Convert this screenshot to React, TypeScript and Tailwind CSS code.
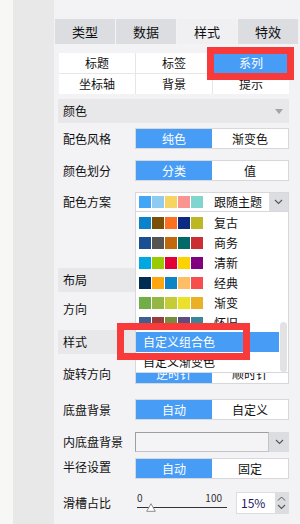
import React from 'react'

const BLUE = 'bg-[#479cf6]'

const TABS = ['类型', '数据', '样式', '特效']
const SUB_TABS = ['标题', '标签', '系列', '坐标轴', '背景', '提示']

const SCHEMES: { name: string; colors: string[] }[] = [
  { name: '复古', colors: ['#0b82cc', '#7a5008', '#fd7020', '#0d2b83', '#bcb723'] },
  { name: '商务', colors: ['#1b4f93', '#545454', '#c0680a', '#006a69', '#cb2f33'] },
  { name: '清新', colors: ['#00a8e1', '#99cc00', '#e30039', '#fcd300', '#800080'] },
  { name: '经典', colors: ['#002c53', '#ffa510', '#0c84c6', '#ffbd66', '#f74d4d'] },
  { name: '渐变', colors: ['#71ae46', '#96b744', '#c4cc38', '#ebe12a', '#eab026'] },
  { name: '怀旧', colors: ['#3c6090', '#973d3d', '#748d3f', '#614c82', '#38869a'] },
]

const THEME = ['#41a6f5', '#8fcbf0', '#f5d462', '#f99491', '#80d5cf']

const Chevron = () => (
  <svg width="9" height="6" viewBox="0 0 9 6">
    <polyline points="1,1 4.5,4.5 8,1" fill="none" stroke="#555" strokeWidth="1.1" />
  </svg>
)

const Swatches = ({ colors }: { colors: string[] }) => (
  <div className="flex w-[75px] shrink-0 gap-px">
    {colors.map((c) => (
      <span key={c} className="h-[12px] w-[12px]" style={{ backgroundColor: c }} />
    ))}
  </div>
)

const Header = ({ title, className = '' }: { title: string; className?: string }) => (
  <div className={`flex h-[24px] items-center justify-between bg-[#e8e8ea] pl-[5px] pr-[6px] ${className}`}>
    <span>{title}</span>
    <svg width="8" height="5" viewBox="0 0 8 5">
      <polygon points="0,0 8,0 4,5" fill="#a3a3a8" />
    </svg>
  </div>
)

const Segment = ({ left, right, on = 0 }: { left: string; right: string; on?: number }) => (
  <div className="flex h-[21px] w-[154px] border border-[#d8d8dc] bg-white">
    <span className={`flex flex-1 items-center justify-center ${on === 0 ? `${BLUE} text-white` : ''}`}>{left}</span>
    <span className={`flex flex-1 items-center justify-center ${on === 1 ? `${BLUE} text-white` : ''}`}>{right}</span>
  </div>
)

const Row = ({ label, children, className = '' }: { label: string; children: React.ReactNode; className?: string }) => (
  <div className={`flex items-center ${className}`}>
    <span className="w-[77px] shrink-0 pl-[5px]">{label}</span>
    {children}
  </div>
)

export default function App() {
  return (
    <div className="flex h-[524px] w-[300px] overflow-hidden font-['Noto_Sans_CJK_SC',sans-serif] text-[12px] leading-[16px] text-[#111]">
      <div className="w-[13px] bg-[#f7f7f5]" />
      <div className="w-[41px] bg-[#e8e8e8]" />

      <div className="relative flex-1 bg-[#f3f3f6] pt-[19px]">
        <nav className="flex h-[25px] gap-px pl-px pr-[2px]">
          {TABS.map((t) => (
            <span
              key={t}
              className={`flex flex-1 items-center justify-center text-[13px] ${t === '样式' ? 'bg-[#f0f0f3]' : 'bg-[#dcdde1]'}`}
            >
              {t}
            </span>
          ))}
        </nav>

        <div className="pl-[4px] pr-[11px]">
          <div className="ml-px mt-[9px] grid grid-cols-3 gap-px bg-[#e6e6ea]">
            {SUB_TABS.map((t) => (
              <span
                key={t}
                className={`flex h-[20px] items-center justify-center ${t === '系列' ? `${BLUE} text-white` : 'bg-white'}`}
              >
                {t}
              </span>
            ))}
          </div>

          <Header title="颜色" className="mt-[5px]" />
          <Row label="配色风格" className="mt-[5px]">
            <Segment left="纯色" right="渐变色" />
          </Row>
          <Row label="颜色划分" className="mt-[11px]">
            <Segment left="分类" right="值" />
          </Row>
          <Row label="配色方案" className="mt-[11px]">
            <div className="flex h-[20px] w-[154px] border border-[#d8d8dc] bg-white">
              <div className="flex flex-1 items-center pl-[3px]">
                <Swatches colors={THEME} />
                <span>跟随主题</span>
              </div>
              <span className="flex w-[19px] items-center justify-center bg-[#dcdde1]">
                <Chevron />
              </span>
            </div>
          </Row>

          <Header title="布局" className="mt-[56px]" />
          <Row label="方向" className="mt-[6px]">
            <Segment left="水平" right="垂直" />
          </Row>
          <Header title="样式" className="mt-[11px]" />
          <Row label="旋转方向" className="mt-[9px]">
            <Segment left="逆时针" right="顺时针" />
          </Row>
          <Row label="底盘背景" className="mt-[15px]">
            <Segment left="自动" right="自定义" />
          </Row>
          <Row label="内底盘背景" className="mt-[12px]">
            <div className="flex h-[20px] w-[154px]">
              <div className="flex-1 border border-t-[#9d9da2] border-l-[#9d9da2] border-r-[#c4c4c8] border-b-[#c4c4c8] bg-[#f4f4f6]" />
              <span className="flex w-[20px] items-center justify-center bg-[#dcdde1]">
                <Chevron />
              </span>
            </div>
          </Row>
          <div className="mt-[6px] flex">
            <span className="w-[77px] shrink-0 pl-[5px] pt-[1px]">半径设置</span>
            <Segment left="自动" right="固定" />
          </div>
          <Row label="滑槽占比" className="mt-[13px]">
            <div className="flex w-[154px] items-center">
              <div className="flex w-[96px] flex-col pl-[2px] pr-[4px]">
                <div className="flex justify-between text-[10px] leading-[10px] text-[#333]">
                  <span>0</span>
                  <span className="pr-[5px]">100</span>
                </div>
                <div className="relative mt-[4px] h-[6px]">
                  <div className="h-px bg-[#333]" />
                  <svg className="absolute left-[9px] top-[-4px]" width="10" height="9" viewBox="0 0 10 9">
                    <polygon points="5,0.7 9.3,8.3 0.7,8.3" fill="#fff" stroke="#8c8c90" />
                  </svg>
                </div>
              </div>
              <div className="ml-[5px] flex h-[22px] flex-1 border border-[#dcdde1] bg-white">
                <span className="flex flex-1 items-center pl-[4px] text-[#1d1b5e]">15%</span>
                <span className="flex w-[13px] flex-col items-center justify-center gap-[3px] bg-[#dcdde1]">
                  <svg width="9" height="5" viewBox="0 0 9 5">
                    <polyline points="1,4.5 4.5,1 8,4.5" fill="none" stroke="#555" />
                  </svg>
                  <Chevron />
                </span>
              </div>
            </div>
          </Row>
        </div>

        {/* open dropdown for 配色方案 */}
        <div className="absolute left-[81px] top-[211px] flex h-[162px] w-[154px] overflow-hidden border border-[#d8d8dc] bg-white">
          <div className="w-[143px] pt-px">
            {SCHEMES.map((s) => (
              <div key={s.name} className="flex h-[20px] items-center pl-[3px]">
                <Swatches colors={s.colors} />
                <span>{s.name}</span>
              </div>
            ))}
            <div className={`mt-[-1px] flex h-[20px] items-center pl-[7px] text-white ${BLUE}`}>自定义组合色</div>
            <div className="flex h-[20px] items-center pl-[7px]">自定义渐变色</div>
          </div>
          <div className="flex-1 pl-px pt-[110px]">
            <div className="h-[50px] w-[7px] rounded-full bg-[#e2e2e4]" />
          </div>
        </div>

        {/* red annotation boxes */}
        <div className="absolute left-[153px] top-[47px] h-[33px] w-[87px] border-[7px] border-[#f83a3a]" />
        <div className="absolute left-[63px] top-[323px] h-[37px] w-[133px] border-[7px] border-[#f83a3a]" />
      </div>
    </div>
  )
}
